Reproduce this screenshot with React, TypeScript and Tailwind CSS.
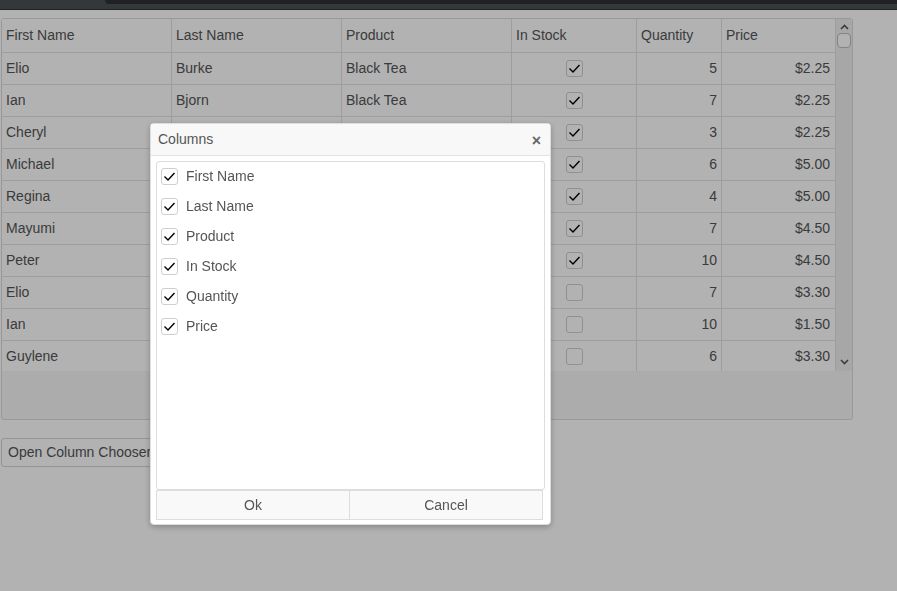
import React from 'react';

type Row = {
  first: string;
  last: string;
  product: string;
  inStock: boolean;
  quantity: number;
  price: string;
};

const rows: Row[] = [
  { first: 'Elio', last: 'Burke', product: 'Black Tea', inStock: true, quantity: 5, price: '$2.25' },
  { first: 'Ian', last: 'Bjorn', product: 'Black Tea', inStock: true, quantity: 7, price: '$2.25' },
  { first: 'Cheryl', last: 'Wilson', product: 'Black Tea', inStock: true, quantity: 3, price: '$2.25' },
  { first: 'Michael', last: 'Davolio', product: 'Green Tea', inStock: true, quantity: 6, price: '$5.00' },
  { first: 'Regina', last: 'Murphy', product: 'Green Tea', inStock: true, quantity: 4, price: '$5.00' },
  { first: 'Mayumi', last: 'Ohno', product: 'Caffe Latte', inStock: true, quantity: 7, price: '$4.50' },
  { first: 'Peter', last: 'Saylor', product: 'Caffe Latte', inStock: true, quantity: 10, price: '$4.50' },
  { first: 'Elio', last: 'Nagase', product: 'Espresso', inStock: false, quantity: 7, price: '$3.30' },
  { first: 'Ian', last: 'Fuller', product: 'Cappuccino', inStock: false, quantity: 10, price: '$1.50' },
  { first: 'Guylene', last: 'Petersen', product: 'Espresso', inStock: false, quantity: 6, price: '$3.30' },
];

const columns = ['First Name', 'Last Name', 'Product', 'In Stock', 'Quantity', 'Price'];

function Check({ checked }: { checked: boolean }) {
  return (
    <span className="flex h-[17px] w-[17px] items-center justify-center rounded-[3px] border border-[#cfcfcf] bg-white">
      {checked && (
        <svg width="13" height="13" viewBox="0 0 13 13" fill="none">
          <polyline points="1.5,6.5 5,10 11.5,3" stroke="#000" strokeWidth="1.4" />
        </svg>
      )}
    </span>
  );
}

function Grid() {
  return (
    <div className="ml-px mt-2 flex h-[402px] w-[852px] flex-col overflow-hidden rounded-[3px] border border-[#dcdcdc] bg-[#f6f6f6]">
      <div className="flex h-[352px]">
        <div className="h-full w-[833px] overflow-hidden bg-white">
          <div className="grid h-[34px] grid-cols-[170px_170px_170px_125px_85px_113px] border-b border-[#e3e3e3] bg-white">
            {columns.map((c, i) => (
              <div key={c} className={`flex items-center px-[4px] ${i < 5 ? 'border-r border-[#e3e3e3]' : ''}`}>
                {c}
              </div>
            ))}
          </div>
          {rows.map((r, i) => (
            <div key={i} className="grid h-[32px] grid-cols-[170px_170px_170px_125px_85px_113px] border-b border-[#e3e3e3]">
              <div className="flex items-center border-r border-[#e3e3e3] px-[4px]">{r.first}</div>
              <div className="flex items-center border-r border-[#e3e3e3] px-[4px]">{r.last}</div>
              <div className="flex items-center border-r border-[#e3e3e3] px-[4px]">{r.product}</div>
              <div className="flex items-center justify-center border-r border-[#e3e3e3] pl-[1px]">
                <Check checked={r.inStock} />
              </div>
              <div className="flex items-center justify-end border-r border-[#e3e3e3] px-[4px]">{r.quantity}</div>
              <div className="flex items-center justify-end pr-[5px]">{r.price}</div>
            </div>
          ))}
        </div>
        <div className="flex h-full w-[17px] flex-col items-center border-l border-[#e3e3e3] bg-[#f0f0f0]">
          <svg width="9" height="6" viewBox="0 0 9 6" className="mt-[5px]">
            <polyline points="1,5 4.5,1.5 8,5" stroke="#555" strokeWidth="1.6" fill="none" />
          </svg>
          <div className="mt-[3px] h-[15px] w-[14px] rounded-[4px] border border-[#bbb] bg-white" />
          <div className="flex-1" />
          <svg width="9" height="6" viewBox="0 0 9 6" className="mb-[6px]">
            <polyline points="1,1 4.5,4.5 8,1" stroke="#555" strokeWidth="1.6" fill="none" />
          </svg>
        </div>
      </div>
    </div>
  );
}

function ColumnChooser() {
  return (
    <div className="fixed left-[150px] top-[123px] z-30 flex h-[402px] w-[401px] flex-col rounded-[4px] border border-[#ddd] bg-white shadow-[0_2px_6px_rgba(0,0,0,0.25)]">
      <div className="flex h-[32px] items-center justify-between border-b border-[#e2e2e2] bg-[#f8f8f8] pl-[7px] pr-[9px]">
        <span>Columns</span>
        <span className="mt-[2px] text-[16px] font-bold leading-none text-[#666]">×</span>
      </div>
      <div className="mx-[5px] mt-[5px] flex flex-1 flex-col rounded-[3px] border border-[#ddd]">
        {columns.map((c, i) => (
          <div key={c} className={`flex h-[30px] items-center gap-[8px] pl-[4px] ${i === 0 ? '-mt-px' : ''}`}>
            <Check checked />
            <span>{c}</span>
          </div>
        ))}
      </div>
      <div className="mb-[4px] ml-[5px] mr-[7px] flex h-[30px]">
        <button className="flex-1 border border-[#ddd] bg-[#f9f9f9] text-[#555]">Ok</button>
        <button className="flex-1 border border-l-0 border-[#ddd] bg-[#f9f9f9] text-[#555]">Cancel</button>
      </div>
    </div>
  );
}

export default function App() {
  return (
    <div className="relative h-[591px] w-[897px] overflow-hidden bg-white font-['Liberation_Sans',Arial,sans-serif] text-[14px] text-[#555]">
      <div className="relative z-20 h-[10px] border-b border-[#202225] bg-[#33383b]">
        <div className="ml-[105px] h-[4px] rounded-bl-[6px] bg-[#1f2124]" />
      </div>
      <Grid />
      <button className="ml-px mt-[18px] h-[29px] rounded-[3px] border border-[#d4d4d4] bg-white px-[6px] text-[#555]">
        Open Column Chooser
      </button>
      <div className="fixed inset-0 z-10 bg-black/30" />
      <ColumnChooser />
    </div>
  );
}
